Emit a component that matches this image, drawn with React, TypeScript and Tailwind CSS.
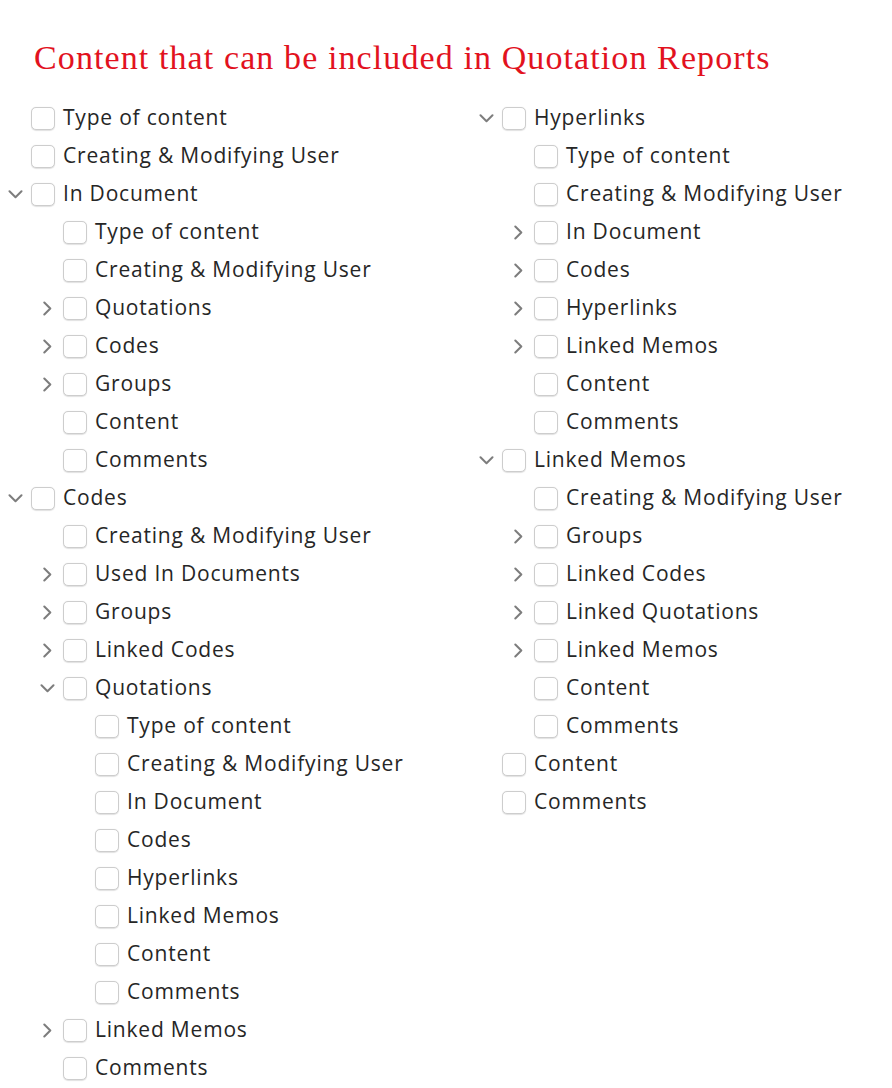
type Item = { label: string; level: number; toggle?: "open" | "closed" };

// Left column of the report options tree
const leftItems: Item[] = [
  { label: "Type of content", level: 0 },
  { label: "Creating & Modifying User", level: 0 },
  { label: "In Document", level: 0, toggle: "open" },
  { label: "Type of content", level: 1 },
  { label: "Creating & Modifying User", level: 1 },
  { label: "Quotations", level: 1, toggle: "closed" },
  { label: "Codes", level: 1, toggle: "closed" },
  { label: "Groups", level: 1, toggle: "closed" },
  { label: "Content", level: 1 },
  { label: "Comments", level: 1 },
  { label: "Codes", level: 0, toggle: "open" },
  { label: "Creating & Modifying User", level: 1 },
  { label: "Used In Documents", level: 1, toggle: "closed" },
  { label: "Groups", level: 1, toggle: "closed" },
  { label: "Linked Codes", level: 1, toggle: "closed" },
  { label: "Quotations", level: 1, toggle: "open" },
  { label: "Type of content", level: 2 },
  { label: "Creating & Modifying User", level: 2 },
  { label: "In Document", level: 2 },
  { label: "Codes", level: 2 },
  { label: "Hyperlinks", level: 2 },
  { label: "Linked Memos", level: 2 },
  { label: "Content", level: 2 },
  { label: "Comments", level: 2 },
  { label: "Linked Memos", level: 1, toggle: "closed" },
  { label: "Comments", level: 1 },
];

// Right column
const rightItems: Item[] = [
  { label: "Hyperlinks", level: 0, toggle: "open" },
  { label: "Type of content", level: 1 },
  { label: "Creating & Modifying User", level: 1 },
  { label: "In Document", level: 1, toggle: "closed" },
  { label: "Codes", level: 1, toggle: "closed" },
  { label: "Hyperlinks", level: 1, toggle: "closed" },
  { label: "Linked Memos", level: 1, toggle: "closed" },
  { label: "Content", level: 1 },
  { label: "Comments", level: 1 },
  { label: "Linked Memos", level: 0, toggle: "open" },
  { label: "Creating & Modifying User", level: 1 },
  { label: "Groups", level: 1, toggle: "closed" },
  { label: "Linked Codes", level: 1, toggle: "closed" },
  { label: "Linked Quotations", level: 1, toggle: "closed" },
  { label: "Linked Memos", level: 1, toggle: "closed" },
  { label: "Content", level: 1 },
  { label: "Comments", level: 1 },
  { label: "Content", level: 0 },
  { label: "Comments", level: 0 },
];

const indent = ["pl-0", "pl-[32px]", "pl-[64px]"];

const Disclosure = ({ open }: { open: boolean }) =>
  open ? (
    <svg width="15" height="9" viewBox="0 0 15 9" fill="none">
      <path d="M1.5 1.3 L7.5 7.3 L13.5 1.3" stroke="#7d7d7d" strokeWidth="2" strokeLinecap="round" strokeLinejoin="round" />
    </svg>
  ) : (
    <svg width="9" height="15" viewBox="0 0 9 15" fill="none">
      <path d="M1.3 1.5 L7.3 7.5 L1.3 13.5" stroke="#7d7d7d" strokeWidth="2" strokeLinecap="round" strokeLinejoin="round" />
    </svg>
  );

const Row = ({ item }: { item: Item }) => (
  <div className={`flex items-center h-[38px] ${indent[item.level]}`}>
    <div className="w-[31px] h-full flex items-center justify-center">
      {item.toggle && <Disclosure open={item.toggle === "open"} />}
    </div>
    <span className="w-[24px] h-[23px] rounded-[5px] border border-[#cdcdcd] bg-white shadow-[0_0.5px_1px_rgba(0,0,0,0.12)]" />
    <span className="ml-[8px] text-[21px] text-[#262626] tracking-[0.8px]">{item.label}</span>
  </div>
);

export default function App() {
  return (
    <div
      className="w-[892px] min-h-[1088px] bg-white pt-[35px]"
      style={{ fontFamily: '"Open Sans", "Liberation Sans", sans-serif' }}
    >
      <h1
        className="pl-[34px] text-[34px] leading-[46px] tracking-[1.1px] text-[#e2121e]"
        style={{ fontFamily: '"Liberation Serif", serif' }}
      >
        Content that can be included in Quotation Reports
      </h1>
      <div className="flex mt-[18px]">
        <div className="w-[471px]">
          {leftItems.map((item, i) => (
            <Row key={i} item={item} />
          ))}
        </div>
        <div className="flex-1">
          {rightItems.map((item, i) => (
            <Row key={i} item={item} />
          ))}
        </div>
      </div>
    </div>
  );
}
